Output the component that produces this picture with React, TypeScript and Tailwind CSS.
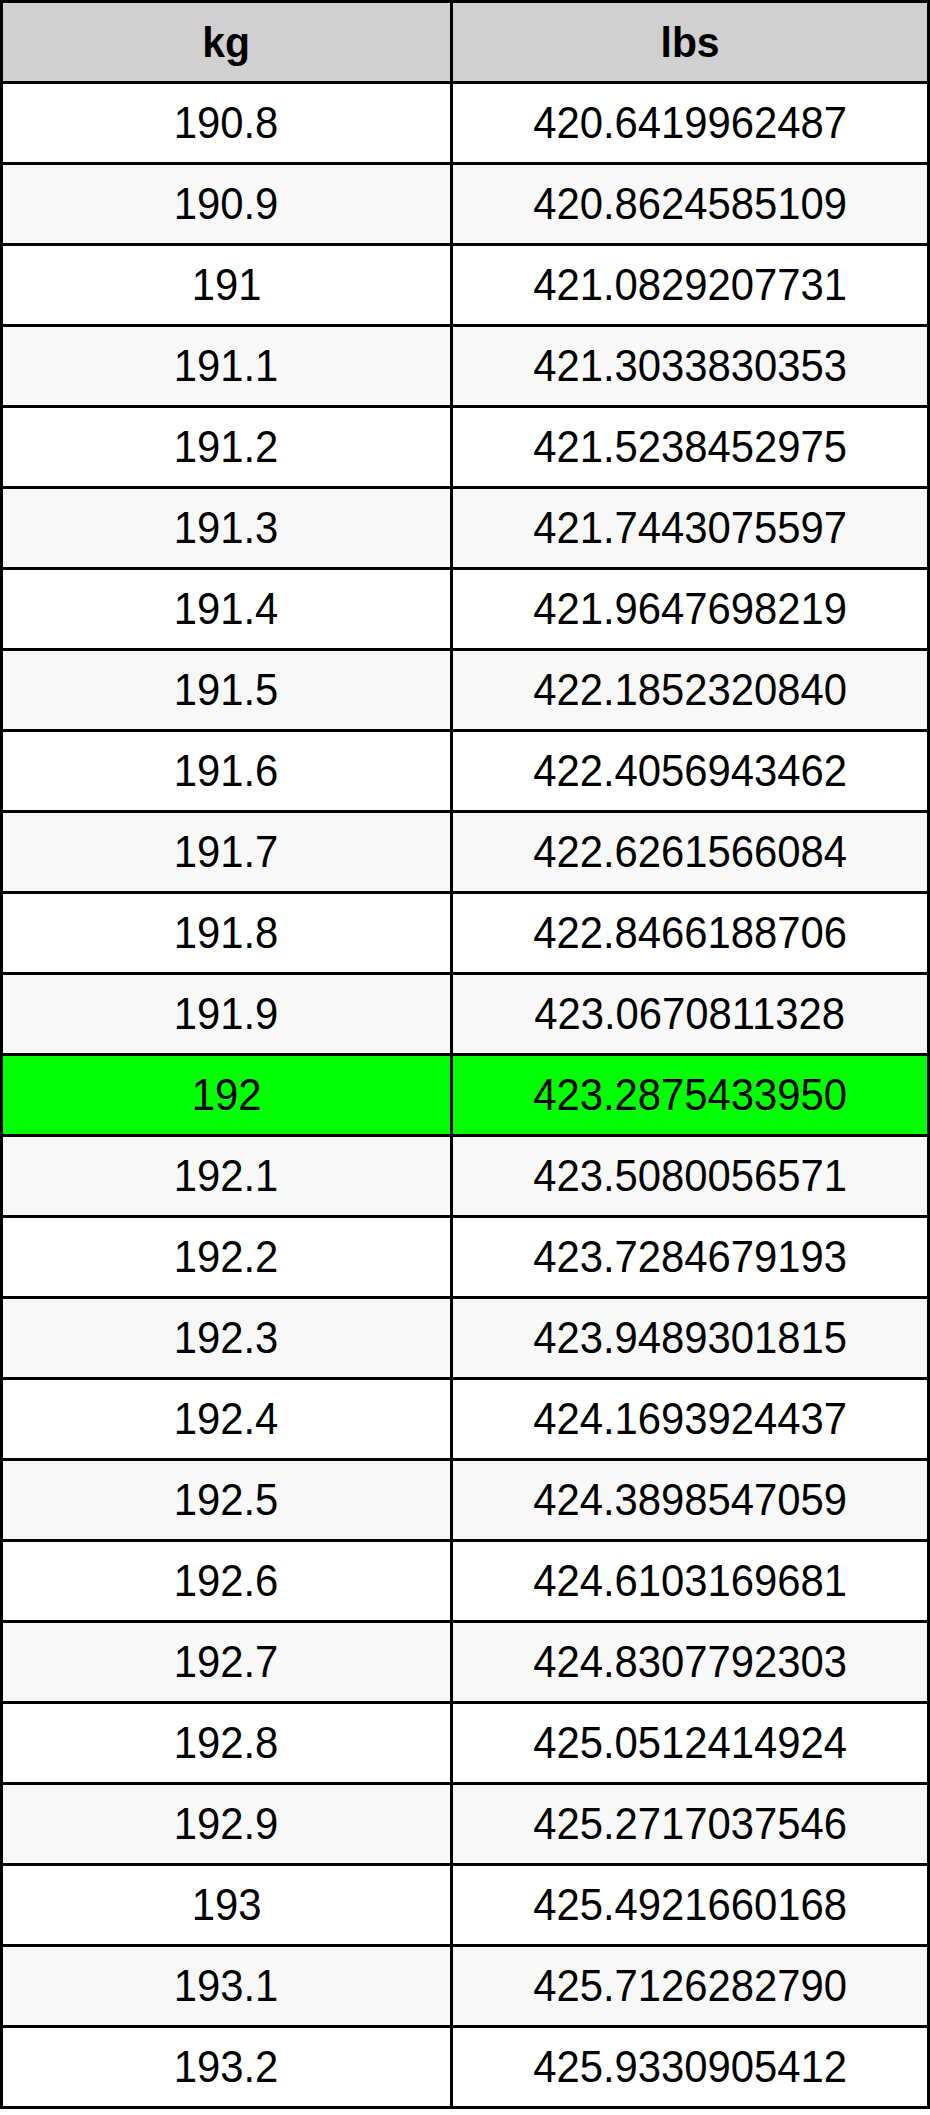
const rows: [string, string][] = [
  ["190.8", "420.6419962487"],
  ["190.9", "420.8624585109"],
  ["191", "421.0829207731"],
  ["191.1", "421.3033830353"],
  ["191.2", "421.5238452975"],
  ["191.3", "421.7443075597"],
  ["191.4", "421.9647698219"],
  ["191.5", "422.1852320840"],
  ["191.6", "422.4056943462"],
  ["191.7", "422.6261566084"],
  ["191.8", "422.8466188706"],
  ["191.9", "423.0670811328"],
  ["192", "423.2875433950"],
  ["192.1", "423.5080056571"],
  ["192.2", "423.7284679193"],
  ["192.3", "423.9489301815"],
  ["192.4", "424.1693924437"],
  ["192.5", "424.3898547059"],
  ["192.6", "424.6103169681"],
  ["192.7", "424.8307792303"],
  ["192.8", "425.0512414924"],
  ["192.9", "425.2717037546"],
  ["193", "425.4921660168"],
  ["193.1", "425.7126282790"],
  ["193.2", "425.9330905412"],
];

function Cell({ text, bg, bold }: { text: string; bg: string; bold?: boolean }) {
  return (
    <div className={`${bg} flex items-center justify-center h-[78px]`}>
      <span
        className={`inline-block scale-x-95 leading-none text-black ${
          bold ? "font-bold text-[43px]" : "text-[44px]"
        }`}
      >
        {text}
      </span>
    </div>
  );
}

export default function App() {
  return (
    <div
      className="w-[930px] bg-white"
      style={{ fontFamily: '"Liberation Sans", Arial, sans-serif' }}
    >
      <div className="grid grid-cols-[447px_474px] gap-[3px] bg-black p-[3px]">
        <Cell text="kg" bg="bg-[#d0d0d0]" bold />
        <Cell text="lbs" bg="bg-[#d0d0d0]" bold />
        {rows.map(([kg, lbs], i) => {
          const bg = kg === "192" ? "bg-[#00ff00]" : i % 2 === 0 ? "bg-white" : "bg-[#f8f8f8]";
          return [
            <Cell key={kg + "k"} text={kg} bg={bg} />,
            <Cell key={kg + "l"} text={lbs} bg={bg} />,
          ];
        })}
      </div>
    </div>
  );
}
